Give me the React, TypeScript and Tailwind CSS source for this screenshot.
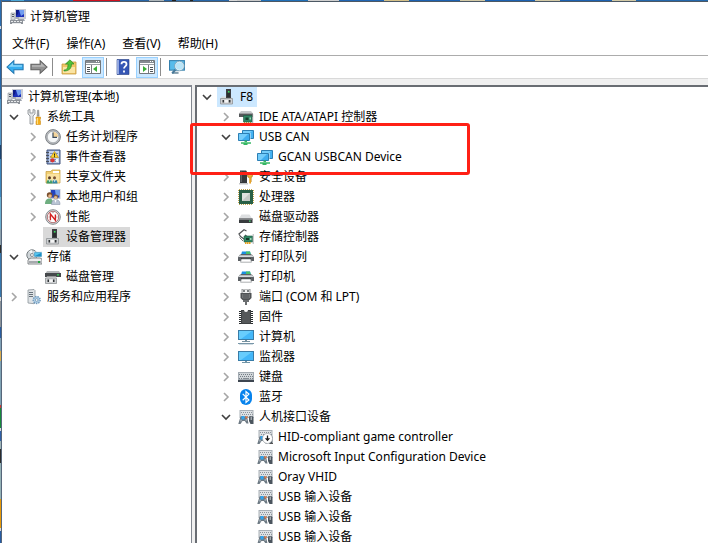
import type { ReactNode } from "react";

function Svg({ children, size = 16 }: { children: ReactNode; size?: number }) {
  return (
    <svg width={size} height={size} viewBox="0 0 16 16" fill="none" aria-hidden="true" className="shrink-0">
      {children}
    </svg>
  );
}

const icons: Record<string, ReactNode> = {
  management: (
    <>
      <path d="M5 0h11v10H5z" fill="#c9ccd6" />
      <path d="M6 1h8v7H6z" fill="#1c2fb8" />
      <path d="M9 1h5v4l-3 2z" fill="#6f9cf0" />
      <path d="M6 1h3l-1 4-2 2z" fill="#0d1a86" />
      <path d="M8 10h6l1 2H7z" fill="#9da3ad" />
      <path d="M1 4h4v7H1z" fill="#d5d8dc" stroke="#8b9097" strokeWidth=".6" />
      <path d="M2 5.5h2M2 7.5h2" stroke="#5a6068" />
      <path d="M0 11h13v4H0z" fill="#8d9299" />
      <path d="M1 12h2v1H1zm3 0h2v1H4zm3 0h2v1H7zm3 0h2v1h-2zM2 14h9v1H2z" fill="#e8eaec" />
      <path d="M6 8h3v2H6z" fill="#a8adb5" />
    </>
  ),
  tools: (
    <>
      <path d="M2 1v4l2 2v8h3V7l2-2V1L7 .5V4H4V.5z" fill="#e4e6e8" stroke="#858a90" strokeWidth=".8" />
      <path d="M11.5 1.2h1.2l.4 6h-2z" fill="#9da2a8" stroke="#777" strokeWidth=".5" />
      <path d="M10 8h4.5v2l-.7 1 .7 1v3.5H10V12l.7-1-.7-1z" fill="#f4ae1b" stroke="#c47f08" strokeWidth=".5" />
      <path d="M11.4 9v6" stroke="#ffe08a" />
    </>
  ),
  clock: (
    <>
      <circle cx="8" cy="8" r="7.4" fill="#b8bbbf" stroke="#74787d" strokeWidth=".9" />
      <circle cx="8" cy="8" r="5.7" fill="#f5f7f8" stroke="#8c9095" strokeWidth=".5" />
      <path d="M8 2.7A5.3 5.3 0 0 1 13.3 8H8z" fill="#f3d49a" />
      <path d="M8 3.5V8.4h4" stroke="#3b4a5c" strokeWidth="1.2" />
    </>
  ),
  events: (
    <>
      <path d="M2 1h13v14H2z" fill="#8aa0cd" stroke="#45577f" />
      <path d="M4 2h10v12H4z" fill="#c6d3ec" />
      <path d="M5 4.5h8M5 7.5h8M5 10.5h8M5 12.5h8" stroke="#6d82b1" strokeWidth=".8" />
      <path d="M1 3.5h3M1 6.5h3M1 9.5h3M1 12.5h3" stroke="#4b5058" />
      <path d="m9.5 2.5 4 6h-8z" fill="#ffd52b" stroke="#b88709" strokeWidth=".6" />
      <path d="M9.5 4.5v2.2M9.5 7.2v1" stroke="#222" />
      <circle cx="7.5" cy="11.3" r="2.1" fill="#d93434" />
      <path d="M11 10h2v3h-2z" fill="#f6f8fc" />
    </>
  ),
  shared: (
    <>
      <path d="M1 2.5h5L7 1h8v13H1z" fill="#f1cf74" stroke="#c39a38" strokeWidth=".7" />
      <path d="M8 2h6v2H8z" fill="#fff" />
      <path d="M2 5h12.5v8.5H2z" fill="#fae2a0" />
      <circle cx="4.5" cy="8.8" r="1.5" fill="#5c3d28" />
      <circle cx="9.5" cy="8.8" r="1.5" fill="#7a5234" />
      <path d="M1.5 14.5c0-2.6 1.2-4 3-4s2.7 1.4 2.7 4z" fill="#3d9a68" />
      <path d="M7.2 14.5c0-2.6 1-4 2.5-4s2.8 1.4 2.8 4z" fill="#3488a5" />
      <path d="m3.8 10.5.8 2 .8-2m3.4 0 .8 2 .8-2" stroke="#fff" strokeWidth=".8" />
    </>
  ),
  users: (
    <>
      <path d="M5 0h10.5v10H5z" fill="#c4c9d5" />
      <path d="M6 1h8.4v7.6H6z" fill="#2442bd" />
      <path d="M10 1h4.4v5L11 8z" fill="#749eea" />
      <circle cx="4.6" cy="6" r="2.8" fill="#7a4e2d" />
      <circle cx="5" cy="7" r="1.8" fill="#e8b98c" />
      <path d="M0 15c0-4 2-5.5 4.5-5.5S8 11 8 15z" fill="#6fae80" />
      <circle cx="10.8" cy="7.8" r="2.3" fill="#7a5a42" />
      <circle cx="10.6" cy="8.6" r="1.6" fill="#e6bd95" />
      <path d="M6.5 15.5c0-4 2-4.8 4.2-4.8s4.3.8 4.3 4.8z" fill="#b9c4d4" stroke="#78869c" strokeWidth=".5" />
      <path d="m9.5 11 1 3 1-3" fill="#fff" />
    </>
  ),
  performance: (
    <>
      <circle cx="8" cy="8" r="7.3" fill="#d9dadc" stroke="#85898d" />
      <circle cx="8" cy="8" r="5.7" fill="#fff" stroke="#a3585a" strokeWidth=".8" />
      <path d="M5.4 11.2V5l5 6.2V5.6" stroke="#d42222" strokeWidth="1.4" />
      <path d="M8 3v1.2M3.6 8h1m6.9 0h1" stroke="#666" strokeWidth=".8" />
    </>
  ),
  device: (
    <>
      <path d="M7 0h5v9H7z" fill="#3d3f42" />
      <path d="M8 4h3v4H8z" fill="#2a2d2f" />
      <path d="M9 2h1.5v1.5H9z" fill="#33e45a" />
      <path d="M3 7.5h4V9h5V7.5l1.5 2.5H1.5z" fill="#d9dbdd" />
      <path d="M1.5 9.5h12V15h-12z" fill="#cfd1d3" stroke="#8f9396" strokeWidth=".8" />
      <path d="M3.5 11h1.6v2.5H3.5zm6.2 0h1.8v2.5H9.700z" fill="#333638" />
      <path d="M5.6 11h3.6v2.5H5.600z" fill="#f5f5f5" />
    </>
  ),
  storage: (
    <>
      <circle cx="6" cy="6" r="5.2" fill="#cfd5d8" stroke="#747c80" />
      <path d="m6 6-3-4 3-1zM6 6l2 4-4 1z" fill="#f5f8f9" />
      <circle cx="6" cy="6" r="1.5" fill="#fff" stroke="#858c91" />
      <path d="M8 3h8v5H8z" fill="#1d8fc5" stroke="#d8e4ea" strokeWidth=".7" />
      <path d="M9 4h6L9 7z" fill="#56c4ed" />
      <path d="m3 10 2-1h9l2 1v5H2v-4z" fill="#ededee" stroke="#6a6e71" strokeWidth=".8" />
      <path d="M3 12h12v2H3z" fill="#a5a9ac" />
      <path d="M12 12h2v2h-2z" fill="#24a842" />
    </>
  ),
  disk: (
    <>
      <path d="M2 2h12l2 3H0z" fill="#b4b7b9" />
      <path d="M0 4h16v4H0z" fill="#45484b" />
      <path d="M12 5.3h2v1.3h-2z" fill="#38da58" />
      <path d="M2 7.500h9l1 2H1z" fill="#e5e5e5" />
      <path d="M.5 9h11v5.500H.5z" fill="#cfd1d3" stroke="#8f9396" strokeWidth=".8" />
      <path d="M2.500 10.500h1.500V13H2.500zm5.500 0h1.500V13H8z" fill="#303437" />
      <path d="M4.500 10.500h3V13h-3z" fill="#f5f5f5" />
    </>
  ),
  services: (
    <>
      <path d="M2 1 8 .5l1 1V14l-1 .7-6-.7z" fill="#dfe3e6" stroke="#8b949b" strokeWidth=".8" />
      <path d="M3 3.5h4M3 5.5h4M3 7.5h4" stroke="#68727b" />
      <circle cx="10.7" cy="11" r="3.5" fill="#aecce4" stroke="#6f98bb" strokeWidth="1.4" strokeDasharray="1.4 1" />
      <circle cx="10.7" cy="11" r="1.3" fill="#fff" stroke="#668eae" strokeWidth=".7" />
    </>
  ),
  ide: (
    <>
      <path d="M3 2h10l2 2.500H1z" fill="#c4c7c9" />
      <path d="M1 4.500h14V8H1z" fill="#55585a" />
      <path d="M5.500 6.500H14V13H5.500z" fill="#2f8563" stroke="#1d5a42" strokeWidth=".6" />
      <path d="M7.500 8.500h3v2.500h-3z" fill="#173d2c" />
      <path d="M11.500 8.500H13v2h-1.500z" fill="#9fd0b4" />
      <path d="M6 13.500h7" stroke="#b08c32" strokeDasharray="1 1" />
      <path d="M14.700 5v9.500" stroke="#8b8f92" strokeWidth=".8" />
    </>
  ),
  network: (
    <>
      <path d="M4.500 1.500h11v8h-11z" fill="#45b2f2" stroke="#2c7fb4" />
      <path d="M5 2h9L7 9H5z" fill="#74cdfb" />
      <path d="M0 4h12.500v8H0z" fill="#e6f4fb" />
      <path d="M.5 4.500h11v7H.5z" fill="#3fadef" stroke="#2c7fb4" />
      <path d="M1 5h9l-6 6H1z" fill="#74cdfb" />
      <path d="M6.500 11.500h2.500v1.500h4v1.700H9.500V16h-4v-1.300H3V13h3.500z" fill="#36b563" />
      <path d="M3 13.500h10" stroke="#83d99e" strokeWidth=".7" />
    </>
  ),
  security: (
    <>
      <path d="M2 1.500h6l1 1V14H2z" fill="#36393b" />
      <path d="M2.500 2.500H4V13H2.500z" fill="#606366" />
      <path d="M1 14h9v1.500H1z" fill="#c3c5c7" />
      <circle cx="12" cy="6.200" r="2.600" fill="#e8ac3c" stroke="#b07411" strokeWidth=".6" />
      <circle cx="12" cy="5.400" r=".8" fill="#fff" />
      <path d="M11.200 8h1.800v6l-.9 1-.9-1z" fill="#e6a42a" />
      <path d="M13 10h1m-1 2h1" stroke="#bf8117" />
    </>
  ),
  cpu: (
    <>
      <path d="M1 .5h14M1 15.5h14M.5 1v14M15.5 1v14" stroke="#c0a24e" strokeDasharray="1 1" />
      <path d="M1 1h14v14H1z" fill="#286047" />
      <path d="M4 4h8v8H4z" fill="#dfe3e0" />
      <path d="M4 12 12 4v8z" fill="#c4cac6" />
    </>
  ),
  drive: (
    <>
      <path d="M3.500 5.500h8L14 9.500H1z" fill="#dcdee0" />
      <path d="M1 9.500h13.500V14H1z" fill="#383b3e" />
      <path d="M1 9.500h13.500V11H1z" fill="#7b7e81" />
      <path d="M11 11.500h1.600v1.200H11z" fill="#50d777" />
    </>
  ),
  controller: (
    <>
      <path d="M8.500 2 6 .8 1 5l1.500 2.500L6 10l3-2.500-2-1.500" stroke="#505355" strokeWidth="1.200" />
      <path d="M1.500 8.500 5 12" stroke="#777" />
      <path d="M6 7h8.500v6H6z" fill="#2f8563" stroke="#1d5a42" strokeWidth=".6" />
      <path d="M8 9h3v2H8z" fill="#123827" />
      <path d="M12 9h1.500v2H12z" fill="#9fd0b4" />
      <path d="M7 14h6" stroke="#e0a022" strokeWidth="2" strokeDasharray="1.5 .5" />
      <path d="M15.200 5v10" stroke="#9da0a2" strokeWidth=".8" />
    </>
  ),
  printer: (
    <>
      <path d="M4 2.500h8L13 6H3z" fill="#1b8fe0" />
      <path d="M8 2.500h4L13 6H8z" fill="#48c06c" />
      <path d="m1.500 6 2-1h9l2 1L16 8.500V12h-3l-.5-2h-9L3 12H0V8.500z" fill="#5c6064" />
      <path d="M1.500 6.200h13L15.500 8H.5z" fill="#d5d8da" />
      <path d="M3 9h10v1.200H3z" fill="#2b2e31" />
      <path d="M3.500 10h9l1 3.200h-11z" fill="#fff" stroke="#8a8e91" strokeWidth=".7" />
    </>
  ),
  port: (
    <>
      <path d="M4 0h8v6H4z" fill="#f0f1f1" stroke="#767a7c" strokeWidth=".8" />
      <path d="M5 1h2v2H5zm4 0h2v2H9z" fill="#7b7f81" />
      <path d="M2.500 4h11v5l-2 2h-7l-2-2z" fill="#505355" />
      <path d="M4.500 5v4M6 5v5m2-5v5m2-5v5m1.500-5v4" stroke="#858889" strokeWidth=".7" />
      <path d="M5 11h6v2H9v3H7v-3H5z" fill="#6b6e70" />
    </>
  ),
  firmware: (
    <>
      <path d="M1 2.5h14M1 4.5h14M1 6.5h14M1 8.5h14M1 10.5h14M1 12.5h14M1 14.5h14" stroke="#292c2e" />
      <path d="M3 1h10v14H3z" fill="#3f4244" />
      <path d="M4 2h8v12H4z" fill="#55585a" />
      <path d="M6 1a2 2 0 0 0 4 0z" fill="#fff" />
    </>
  ),
  computer: (
    <>
      <path d="M0 1h16v10H0z" fill="#397ca7" />
      <path d="M1 2h14v8H1z" fill="#43b7f9" />
      <path d="M1 2h13L3 10H1z" fill="#68cdfd" />
      <path d="M7 11h2v1h3v1H4v-1h3z" fill="#76919f" />
      <path d="M0 14.5h16" stroke="#7896a8" />
      <path d="M1 15.5h14" stroke="#d2dde3" />
    </>
  ),
  monitor: (
    <>
      <path d="M0 2h16v10H0z" fill="#397ca7" />
      <path d="M1 3h14v8H1z" fill="#43b7f9" />
      <path d="M1 3h13L3 11H1z" fill="#68cdfd" />
      <path d="M7 12h2v1h3v1H4v-1h3z" fill="#7195a8" />
    </>
  ),
  keyboard: (
    <>
      <path d="M0 3h16v9H0z" fill="#a3abb2" />
      <path d="M1 4h14v6H1z" fill="#d1d6da" />
      <path d="M1 5.5h14M2 7.5h13M1 9.5h3m8 0h3" stroke="#747d85" strokeDasharray="1 1" />
      <path d="M5 9.5h6" stroke="#858d94" />
      <path d="M0 11h16v2H0z" fill="#3d4650" />
    </>
  ),
  bluetooth: (
    <>
      <rect x="2" y="0" width="12" height="16" rx="6" fill="#0783ed" />
      <path d="m4.7 4.8 6.2 6.2L8 13.5v-11l2.9 2.6-6.2 6.1" stroke="#fff" strokeWidth="1.2" />
    </>
  ),
  hid: (
    <>
      <path d="M1.500 1h14v8h-14z" fill="#a9b0b6" />
      <path d="M2.500 2h12v6h-12z" fill="#dde1e4" />
      <path d="M3 3.5h12M4 5.5h11M3 7.5h12" stroke="#8b949b" strokeDasharray="1 1" />
      <path d="M2.500 7.500h6.500l1.500 7h-2l-1.700-2.500H4.500L2.500 15H.3z" fill="#6d7983" />
      <path d="M2 10.500h2v2H2zM7.500 10h1.500v2H7.500z" fill="#98a3ab" />
      <path d="M3.500 7h3v3.500h-3z" fill="#32a4ec" />
      <path d="M7.500 7.500h2v1.800h-2z" fill="#e8743a" />
      <path d="M11 8.500c0-2 4.500-2 4.500 0V15h-3L11 12z" fill="#4b555e" />
      <path d="M13.200 7.500v3.500" stroke="#d7dde1" strokeWidth=".9" />
    </>
  ),
};

icons.hidDisabled = (
  <>
    {icons.hid}
    <circle cx="10.5" cy="9.5" r="5" fill="#fff" stroke="#9a9fa3" strokeWidth=".7" />
    <path d="M10.5 6.500v4" stroke="#1c1c1c" strokeWidth="1.300" />
    <path d="M7.800 9.200h5.400L10.500 12.300z" fill="#1c1c1c" />
    <path d="M13.500 14.500H16" stroke="#555" />
  </>
);

type Node = {
  label: string;
  icon: string;
  state?: "open" | "closed" | "leaf";
  selected?: string;
  children?: Node[];
};

const leftTree: Node[] = [
  {
    label: "系统工具",
    icon: "tools",
    state: "open",
    children: [
      { label: "任务计划程序", icon: "clock", state: "closed" },
      { label: "事件查看器", icon: "events", state: "closed" },
      { label: "共享文件夹", icon: "shared", state: "closed" },
      { label: "本地用户和组", icon: "users", state: "closed" },
      { label: "性能", icon: "performance", state: "closed" },
      { label: "设备管理器", icon: "device", selected: "bg-[#d9d9d9]" },
    ],
  },
  { label: "存储", icon: "storage", state: "open", children: [{ label: "磁盘管理", icon: "disk" }] },
  { label: "服务和应用程序", icon: "services", state: "closed" },
];

const deviceTree: Node[] = [
  {
    label: "F8",
    icon: "device",
    state: "open",
    selected: "bg-[#cce8ff]",
    children: [
      { label: "IDE ATA/ATAPI 控制器", icon: "ide", state: "closed" },
      {
        label: "USB CAN",
        icon: "network",
        state: "open",
        children: [{ label: "GCAN USBCAN Device", icon: "network" }],
      },
      { label: "安全设备", icon: "security", state: "closed" },
      { label: "处理器", icon: "cpu", state: "closed" },
      { label: "磁盘驱动器", icon: "drive", state: "closed" },
      { label: "存储控制器", icon: "controller", state: "closed" },
      { label: "打印队列", icon: "printer", state: "closed" },
      { label: "打印机", icon: "printer", state: "closed" },
      { label: "端口 (COM 和 LPT)", icon: "port", state: "closed" },
      { label: "固件", icon: "firmware", state: "closed" },
      { label: "计算机", icon: "computer", state: "closed" },
      { label: "监视器", icon: "monitor", state: "closed" },
      { label: "键盘", icon: "keyboard", state: "closed" },
      { label: "蓝牙", icon: "bluetooth", state: "closed" },
      {
        label: "人机接口设备",
        icon: "hid",
        state: "open",
        children: [
          { label: "HID-compliant game controller", icon: "hidDisabled" },
          { label: "Microsoft Input Configuration Device", icon: "hid" },
          { label: "Oray VHID", icon: "hid" },
          { label: "USB 输入设备", icon: "hid" },
          { label: "USB 输入设备", icon: "hid" },
          { label: "USB 输入设备", icon: "hid" },
        ],
      },
    ],
  },
];

function Toggle({ state, label }: { state?: string; label: string }) {
  if (!state) return <span className="w-[19px] shrink-0" />;
  const open = state === "open";
  return (
    <button
      type="button"
      aria-label={`${open ? "折叠" : "展开"} ${label}`}
      aria-expanded={open}
      className="flex h-5 w-[19px] shrink-0 items-center justify-center pr-px"
    >
      <svg width="10" height="10" viewBox="0 0 10 10" fill="none" aria-hidden="true">
        {open ? (
          <path d="m1 3 4 4 4-4" stroke="#404040" strokeWidth="1.6" />
        ) : (
          <path d="m3 1 4 4-4 4" stroke="#a6a6a6" strokeWidth="1.6" />
        )}
      </svg>
    </button>
  );
}

function Item({ node }: { node: Node }) {
  return (
    <button
      type="button"
      className={`flex h-5 items-center gap-[5px] whitespace-nowrap pr-1 pl-0.5 leading-5 ${node.selected ?? ""}`}
    >
      <Svg>{icons[node.icon]}</Svg>
      <span>{node.label}</span>
    </button>
  );
}

function Tree({ nodes, nested = false }: { nodes: Node[]; nested?: boolean }) {
  return (
    <ul className={nested ? "pl-[19px]" : ""}>
      {nodes.map((node, i) => (
        <li key={i}>
          <div className="flex h-5">
            <Toggle state={node.state} label={node.label} />
            <Item node={node} />
          </div>
          {node.children && <Tree nodes={node.children} nested />}
        </li>
      ))}
    </ul>
  );
}

function ToolButton({ label, active = false, children }: { label: string; active?: boolean; children: ReactNode }) {
  return (
    <button
      type="button"
      aria-label={label}
      className={`mx-px flex h-[21px] w-[22px] items-center justify-center ${
        active ? "border border-[#99d1ff] bg-[#cce8ff]" : ""
      }`}
    >
      {children}
    </button>
  );
}

function ToolSeparator() {
  return (
    <span className="flex h-[18px] w-1.5 pl-px">
      <span className="w-px bg-[#8c8c8c]" />
    </span>
  );
}

function Arrow({ back = false }: { back?: boolean }) {
  return (
    <Svg size={18}>
      {back ? (
        <>
          <path d="M.8 8 7 2.3v3.2h8.2v5H7v3.2z" fill="#35aef0" stroke="#2475ad" strokeWidth=".9" />
          <path d="M2.5 7.7 6.2 4.3v2.2h8v1.2z" fill="#8bd8fb" />
        </>
      ) : (
        <>
          <path d="M15.2 8 9 2.3v3.2H.8v5H9v3.2z" fill="#929292" stroke="#5f5f5f" strokeWidth=".9" />
          <path d="M13.5 7.7 9.8 4.3v2.2h-8v1.2z" fill="#b8b8b8" />
        </>
      )}
    </Svg>
  );
}

function PaneIcon({ right = false }: { right?: boolean }) {
  return (
    <Svg>
      <path d="M.5 1.5h15v13H.5z" fill="#fff" stroke="#73777b" />
      <path d="M1 2h14v2H1z" fill="#858b91" />
      <path d="M11 2.5h1m1 0h1" stroke="#fff" />
      <path d="M1 5.5h14" stroke="#9ba0a5" />
      {right ? (
        <>
          <path d="M9.5 6v8" stroke="#777b80" />
          <path d="M11 8.5h3m-3 2h3m-3 2h3" stroke="#4d5257" />
          <path d="m4 7 4 3-4 3z" fill="#39ae36" />
        </>
      ) : (
        <>
          <path d="M6.5 6v8" stroke="#777b80" />
          <path d="M2 8.5h3m-3 2h3m-3 2h3" stroke="#4d5257" />
          <path d="m12 7-4 3 4 3z" fill="#39ae36" />
        </>
      )}
    </Svg>
  );
}

function Toolbar() {
  return (
    <div role="toolbar" aria-label="工具栏" className="flex h-[23px] items-center border-b border-[#d9d9d9] pl-px">
      <ToolButton label="后退">
        <Arrow back />
      </ToolButton>
      <ToolButton label="前进">
        <Arrow />
      </ToolButton>
      <ToolSeparator />
      <ToolButton label="上移一级">
        <Svg>
          <path d="M1 5h5l1-2h8v12H1z" fill="#f0c666" stroke="#c49a42" strokeWidth=".8" />
          <path d="M2 8h12v6H2z" fill="#fae4a3" />
          <path d="M3 11c3 0 4-2 4-6H4.5L9 .8 13 5h-2.5c0 5-3 7-7.5 7z" fill="#4fc13a" stroke="#318b26" strokeWidth=".7" />
        </Svg>
      </ToolButton>
      <ToolButton label="显示/隐藏控制台树" active>
        <PaneIcon />
      </ToolButton>
      <ToolSeparator />
      <ToolButton label="帮助">
        <Svg>
          <path d="M2 .5h12v15H2z" fill="#3556b5" stroke="#233c83" strokeWidth=".6" />
          <path d="M2 1h2v14H2z" fill="#92a7df" />
          <path d="M6.5 5.2c0-3 5-3 5 0C11.5 7.4 9 7.4 9 9.6M9 11.5v2" stroke="#fff" strokeWidth="1.8" />
        </Svg>
      </ToolButton>
      <ToolButton label="显示/隐藏操作窗格" active>
        <PaneIcon right />
      </ToolButton>
      <ToolSeparator />
      <ToolButton label="扫描检测硬件改动">
        <Svg size={17}>
          <path d="M0 1h15v10H0z" fill="#3480ae" />
          <path d="M1 2h13v8H1z" fill="#58bceb" />
          <path d="M3 12h6v2H3z" fill="#829cac" />
          <path d="m6 10-3 3.5" stroke="#477999" strokeWidth="2" />
          <circle cx="9.8" cy="6.6" r="4.1" fill="#b9e5f8" stroke="#f0f6f9" strokeWidth="1.1" />
          <circle cx="9.8" cy="6.6" r="4.5" stroke="#4f87a7" strokeWidth=".6" />
        </Svg>
      </ToolButton>
    </div>
  );
}

const topBands: [number, string][] = [
  [9, "#2a6db0"], [13, "#4ba8d8"], [49, "#2766a8"], [47, "#d0101e"], [29, "#2766a8"], [15, "#aeb6ba"],
  [8, "#2766a8"], [4, "#202020"], [15, "#3a78b4"], [3, "#202020"], [36, "#2766a8"], [8, "#d8d8d8"],
  [24, "#c9c9c9"], [47, "#2070b8"], [31, "#cfcfcf"], [45, "#2066b4"], [25, "#d4c088"], [51, "#1c62b2"],
  [25, "#d2c9a6"], [51, "#1c62b2"], [25, "#d2c9a6"], [52, "#1c62b2"], [24, "#d2c9a6"], [72, "#2468ac"],
];

const leftBands: [number, string][] = [
  [26, "#2a6db0"], [3, "#d5dde4"], [70, "#2566a8"], [46, "#4f93c4"], [14, "#1b446f"], [38, "#3d87bd"],
  [32, "#6aaed0"], [16, "#8ca0ac"], [8, "#2c2c28"], [45, "#3777ac"], [4, "#d8d8d8"], [26, "#8b9298"],
  [11, "#2a5da0"], [13, "#7fa0b5"], [10, "#d9ad50"], [44, "#7fa3b4"], [3, "#c83c34"], [20, "#178a3a"],
  [3, "#d6dce0"], [10, "#2f60a8"], [8, "#9fb4b6"], [14, "#2c2c2c"], [36, "#94b2b6"], [29, "#e89a08"],
  [3, "#d9d9d9"], [12, "#265ca4"],
];

function Bands({ bands }: { bands: [number, string][] }) {
  return (
    <>
      {bands.map(([weight, color], i) => (
        <span key={i} style={{ flexGrow: weight, backgroundColor: color }} />
      ))}
    </>
  );
}

export default function App() {
  return (
    <div className="flex h-screen overflow-hidden bg-white font-['Noto_Sans','Noto_Sans_CJK_SC',sans-serif] text-[12px] text-black">
      <div className="flex w-0.5 shrink-0 flex-col border-r border-[#56667a]">
        <Bands bands={leftBands} />
      </div>
      <div className="flex min-w-0 flex-1 flex-col">
        <div className="flex h-0.5 shrink-0 border-b border-[#4c5864]">
          <Bands bands={topBands} />
        </div>
        <header className="flex h-[30px] shrink-0 items-center gap-1 pl-2">
          <Svg>{icons.management}</Svg>
          <h1 className="leading-5">计算机管理</h1>
        </header>
        <nav aria-label="菜单" className="flex h-6 shrink-0 items-center gap-px border-b border-[#acacac] pl-0.5 leading-5">
          {["文件(F)", "操作(A)", "查看(V)", "帮助(H)"].map((item) => (
            <button key={item} type="button" className="px-2">
              {item}
            </button>
          ))}
        </nav>
        <Toolbar />
        <main className="flex min-h-0 flex-1 bg-[#f0f0f0] pt-1.5">
          <aside className="w-[190px] shrink-0 overflow-hidden border-t-2 border-r border-t-[#828790] border-r-[#828790] bg-white pl-[3px]">
            <Item node={{ label: "计算机管理(本地)", icon: "management" }} />
            <Tree nodes={leftTree} />
          </aside>
          <section aria-label="设备" className="relative ml-[3px] min-w-0 flex-1 border-t-2 border-l-2 border-[#696d73] bg-white pl-px">
            <div className="h-full overflow-hidden">
              <Tree nodes={deviceTree} />
            </div>
            <div className="pointer-events-none absolute top-9 -left-[7px] h-[52px] w-[280px] rounded-[3px] border-3 border-[#ff2015]" />
          </section>
        </main>
      </div>
    </div>
  );
}
